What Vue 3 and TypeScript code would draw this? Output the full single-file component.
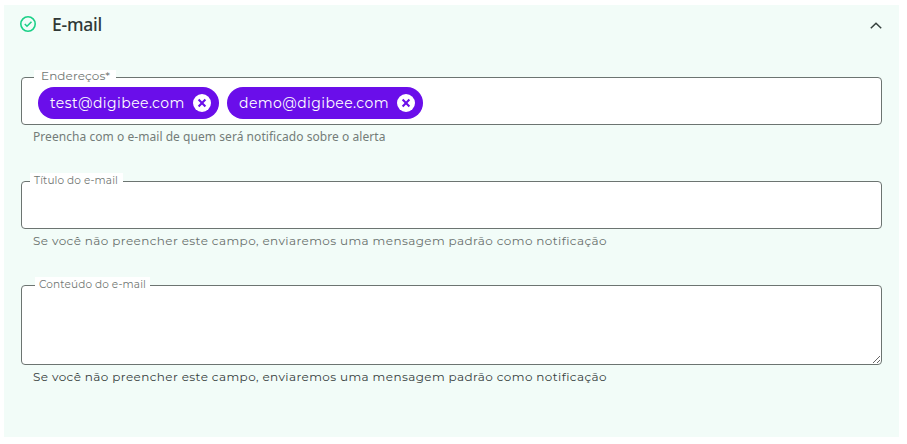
<script setup lang="ts">
import { ref } from 'vue'

const open = ref(true)
const addresses = ref<string[]>(['test@digibee.com', 'demo@digibee.com'])
const title = ref('')
const content = ref('')

function remove(index: number) {
  addresses.value.splice(index, 1)
}
</script>

<template>
  <section class="panel">
    <header class="head" @click="open = !open">
      <svg class="check" viewBox="0 0 16 16" fill="none">
        <circle cx="8" cy="8" r="7.2" />
        <path d="M4.8 8 7 10.2 11.5 5.8" />
      </svg>
      <h2 class="heading">E-mail</h2>
      <svg class="chevron" viewBox="0 0 12 8" fill="none"><path d="M.8 7.3 6 2.3 11.2 7.3" /></svg>
    </header>
    <div v-if="open" class="fields">
      <div class="field addresses">
        <label class="label">Endereços*</label>
        <div class="box chips">
          <span v-for="(address, i) in addresses" :key="address" class="chip">
            <span class="address">{{ address }}</span>
            <svg class="remove" viewBox="0 0 18 18" @click="remove(i)">
              <circle cx="9" cy="9" r="9" />
              <path d="M5.6 5.6 12.4 12.4M12.4 5.6 5.6 12.4" />
            </svg>
          </span>
        </div>
        <p class="hint noto">Preencha com o e-mail de quem será notificado sobre o alerta</p>
      </div>
      <div class="field title">
        <label class="label" for="title">Título do e-mail</label>
        <input id="title" v-model="title" class="box" type="text" />
        <p class="hint">Se você não preencher este campo, enviaremos uma mensagem padrão como notificação</p>
      </div>
      <div class="field content">
        <label class="label" for="content">Conteúdo do e-mail</label>
        <textarea id="content" v-model="content" class="box area"></textarea>
        <p class="hint dark">Se você não preencher este campo, enviaremos uma mensagem padrão como notificação</p>
      </div>
    </div>
  </section>
</template>

<style>
body {
  background: #fff;
}
</style>

<style scoped>
.panel {
  box-sizing: border-box;
  width: 895px;
  height: 432px;
  margin: 5px 0 0 4px;
  padding: 0 17px;
  background: #f2fcf8;
  font-family: Montserrat, Inter, sans-serif;
  display: flow-root;
}
.head {
  display: flex;
  align-items: center;
  height: 38px;
}
.check {
  width: 16px;
  height: 16px;
  margin-left: -1px;
  stroke: #1bd088;
  stroke-width: 1.6;
}
.heading {
  margin: 0 auto 0 16px;
  font: 500 17.5px/24px "Noto Sans", sans-serif;
  letter-spacing: -0.22px;
  color: #303836;
}
.chevron {
  width: 12px;
  height: 8px;
  margin-top: 1px;
  stroke: #37413e;
  stroke-width: 1.5;
}
.fields {
  display: flex;
  flex-direction: column;
  gap: 32px;
  padding-top: 34px;
}
.field {
  position: relative;
}
.box {
  box-sizing: border-box;
  display: block;
  width: 861px;
  height: 48px;
  margin: 0;
  padding: 0 16px;
  border: 1px solid #6c7471;
  border-radius: 4px;
  background: #fff;
  font: inherit;
  outline: none;
}
.area {
  height: 80px;
  resize: vertical;
}
.chips {
  display: flex;
  align-items: center;
  gap: 8px;
  padding-top: 4px;
}
.chip {
  box-sizing: border-box;
  display: flex;
  align-items: center;
  justify-content: space-between;
  height: 32px;
  padding: 0 8px 0 12px;
  border-radius: 16px;
  background: #6a0eea;
  color: #fff;
  font-size: 14px;
}
.chip:first-child {
  width: 181px;
}
.chip:nth-child(2) {
  width: 196px;
}
.address {
  letter-spacing: 0.42px;
  white-space: nowrap;
}
.remove {
  width: 18px;
  height: 18px;
  fill: #fff;
  stroke: none;
}
.remove path {
  stroke: #6a0eea;
  stroke-width: 2.1;
}
.label {
  position: absolute;
  box-sizing: border-box;
  background: #fff;
  color: #717673;
  white-space: nowrap;
}
.addresses .label {
  left: 13px;
  top: -7px;
  width: 82px;
  height: 12px;
  padding-left: 7px;
  font-size: 12px;
  line-height: 12px;
  letter-spacing: 0.1px;
}
.title .label {
  left: 9px;
  top: -8px;
  width: 93px;
  height: 13px;
  padding-left: 4px;
  font-size: 10.5px;
  line-height: 15px;
  letter-spacing: 0.12px;
}
.content .label {
  left: 14px;
  top: -8px;
  width: 115px;
  height: 13px;
  padding-left: 4px;
  font-size: 10.5px;
  line-height: 15px;
  letter-spacing: 0.13px;
}
.hint {
  margin: 4px 0 0 12px;
  height: 20px;
  font-size: 12px;
  line-height: 16px;
  letter-spacing: 0.4px;
  color: #69706d;
  white-space: nowrap;
}
.noto {
  font-family: "Noto Sans", sans-serif;
  font-size: 12px;
  letter-spacing: 0.05px;
  color: #747c79;
}
.dark {
  color: #37413e;
}
</style>
